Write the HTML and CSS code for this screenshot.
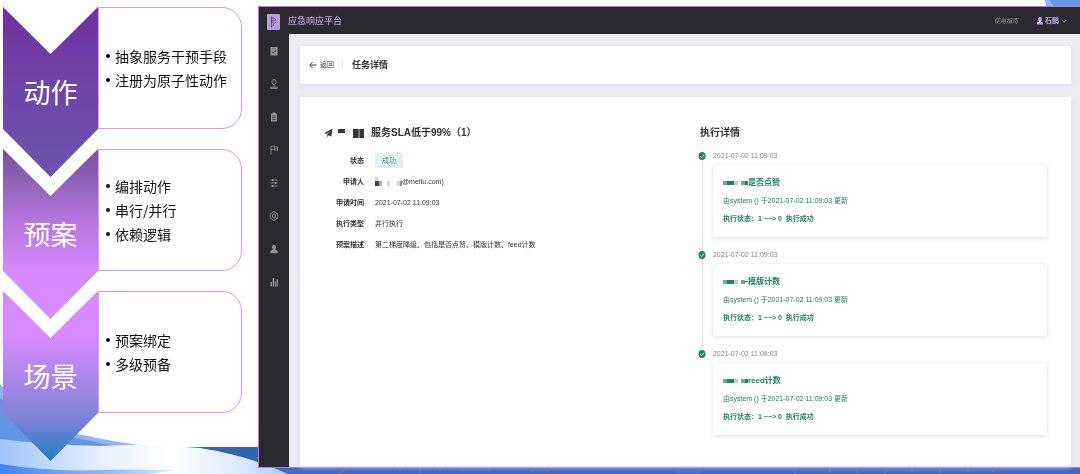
FILE: index.html
```
<!DOCTYPE html>
<html lang="zh-CN">
<head>
<meta charset="utf-8">
<title>应急响应平台</title>
<link rel="stylesheet" href="styles.css">
</head>
<body>
<svg class="backdrop" viewBox="0 0 1080 474" preserveAspectRatio="none" aria-hidden="true">
  <defs>
    <linearGradient id="wave" x1="0" x2="1"><stop offset="0" stop-color="#9fc4fb"/><stop offset=".35" stop-color="#e6f0ff"/><stop offset=".6" stop-color="#ffffff"/><stop offset=".85" stop-color="#d9e8ff"/><stop offset="1" stop-color="#a9cbff"/></linearGradient>
    <linearGradient id="low" x1="0" x2="1"><stop offset="0" stop-color="#3f83f2"/><stop offset=".6" stop-color="#8db8fa"/><stop offset="1" stop-color="#dfebff"/></linearGradient>
  </defs>
  <path fill="#8db5f6" d="M0 384Q30 420 78 434Q118 443 155 447H0Z"/>
  <path fill="#6494e4" d="M0 398Q30 424 66 436L120 447H0Z"/>
  <path fill="#3563b5" d="M150 447H258L258 466H1080V474H150Z"/>
  <path fill="#3b6dc4" d="M258 467H1080V474H258Z"/>
  <path fill="none" stroke="#4d82d6" d="M340 473l8-5M400 468v6M420 468v6M440 468v6M460 470h30M530 471h20M676 472h25M795 467v7M830 467v7M857 467v7M885 467v7M912 467v7M940 467v7M968 467v7M800 471h195"/>
  <path fill="url(#wave)" d="M0 439Q50 445 100 446Q150 443 200 448Q250 456 288 474H0Z"/>
  <path fill="url(#low)" d="M0 464Q50 472 100 470Q130 469 175 470L150 474H0Z"/>
  <path fill="#8db5f6" d="M1045 0h8l4 7h-11z"/>
  <path fill="#6494e4" d="M1050 0h30v7h-26z"/>
</svg>
<div class="slide">
  <section class="steps">
    <article class="step">
      <h2 class="arrow arrow-action">动作</h2>
      <ul class="points"><li>抽象服务干预手段</li><li>注册为原子性动作</li></ul>
    </article>
    <article class="step">
      <h2 class="arrow arrow-plan">预案</h2>
      <ul class="points"><li>编排动作</li><li>串行/并行</li><li>依赖逻辑</li></ul>
    </article>
    <article class="step">
      <h2 class="arrow arrow-scene">场景</h2>
      <ul class="points"><li>预案绑定</li><li>多级预备</li></ul>
    </article>
  </section>

  <div class="app">
    <header class="topbar">
      <svg class="logo" viewBox="0 0 13 16" aria-hidden="true"><rect width="13" height="16" rx="1" fill="#b99be0"/><g fill="none" stroke="#413650" stroke-width=".8"><path d="M4.500 13.500V3"/><path stroke-dasharray="1.200 .6" d="M4.500 2.500L9 5.500L5.500 8M6 4v6.500L9 8M4.500 13L7 11"/></g></svg>
      <h1 class="brand">应急响应平台</h1>
      <a class="guide" href="#">使用指南</a>
      <button class="user" type="button">
        <svg viewBox="0 0 8 8" class="user-icon" aria-hidden="true"><path fill="currentColor" d="M4 0a1.800 2.100 0 0 1 1 3.900V5h1.500Q7 5 7 7.500H1Q1 5 1.500 5H3V3.900A1.800 2.100 0 0 1 4 0z"/></svg>
        石鹏
        <svg viewBox="0 0 6 6" class="caret" aria-hidden="true"><path fill="none" stroke="currentColor" stroke-width=".7" d="M.8 2L3 4.300L5.200 2"/></svg>
      </button>
    </header>

    <nav class="sidebar" aria-label="主导航">
      <a href="#" aria-label="任务"><svg viewBox="0 0 10 10"><path fill="currentColor" d="M1.500 1h7v8.500h-7z"/><path fill="none" stroke="#2a292e" stroke-width=".8" d="M3 6l1.500.8L7 4.300"/><path stroke="#2a292e" stroke-width=".4" d="M3 2.800h4"/></svg></a>
      <a href="#" aria-label="位置"><svg viewBox="0 0 10 10"><g fill="none" stroke="currentColor" stroke-width=".9"><ellipse cx="5" cy="3" rx="2.100" ry="2.400"/><path d="M5 5.400v3M1.800 9.400V8.200h6.400v1.200z"/></g></svg></a>
      <a href="#" aria-label="清单"><svg viewBox="0 0 10 10"><path fill="currentColor" d="M2 1.500h1.800V.500h2.400v1H8v8H2z"/><path stroke="#2a292e" stroke-width=".7" d="M3.200 4h3.600M3.200 5.700h3.600M3.200 7.400h3.600"/></svg></a>
      <a href="#" aria-label="旗标"><svg viewBox="0 0 10 10"><path fill="none" stroke="currentColor" stroke-width=".8" d="M2 9.700V1.200h3.500v.7h3v3.400H5.500v-.8H2M5.500 1.900v2.600L8.500 2.500"/></svg></a>
      <a href="#" aria-label="配置"><svg viewBox="0 0 10 10"><g stroke="currentColor" stroke-width=".8"><path d="M1.500 2h7M1.500 5h7M1.500 8h7"/><path stroke-width="1.800" d="M3 2h1.500M5.800 5h1.500M3 8h1.500"/></g></svg></a>
      <a href="#" aria-label="设置"><svg viewBox="0 0 10 10"><g fill="none" stroke="currentColor" stroke-width=".8"><path d="M3.600.8h2.800l.5 1.300 1.500.4.600 2.500-.6 2.500-1.500.4-.5 1.300H3.600l-.5-1.300-1.500-.4L1 5l.6-2.500 1.500-.4z"/><ellipse cx="5" cy="5" rx="1.700" ry="2"/></g></svg></a>
      <a href="#" aria-label="用户"><svg viewBox="0 0 10 10"><path fill="currentColor" d="M5 .8a2 2.300 0 0 1 1.200 4.100v.7L8.600 7v2.200H1.400V7l2.400-1.400v-.7A2 2.300 0 0 1 5 .8z"/></svg></a>
      <a href="#" aria-label="统计"><svg viewBox="0 0 10 10"><path fill="currentColor" d="M1.500 5H3v4.500H1.500zM3.700 1h1.500v8.500H3.700zM5.900 4.200h1.200v5.300H5.900zM7.700 2.500H9v7H7.700z"/></svg></a>
    </nav>

    <main class="content">
      <div class="card titlebar">
        <a class="back" href="#"><svg viewBox="0 0 8 8" aria-hidden="true"><path fill="none" stroke="currentColor" stroke-width=".9" d="M7.500 4H1M3.500 1L.8 4l2.700 3"/></svg>返回</a>
        <h2>任务详情</h2>
      </div>

      <div class="card detail">
        <section class="summary">
          <h3 class="task-name">
            <svg class="plane" viewBox="0 0 9 10" aria-hidden="true"><path fill="currentColor" d="M8.500.5L7.300 8.500 4.700 7.300 3.600 9.500 3.200 6.500 7 2.500 2.500 6 .5 5z"/></svg>
            <svg class="mask-name" viewBox="0 0 34 12" aria-hidden="true"><path fill="#35363c" d="M1 2h7v4H1zM16 2h5v9h-5zM23 2h4v9h-4z"/><path fill="#777a80" d="M21 2h2v9h-2z"/><path fill="#e8e9ec" d="M8 2h6v5H8zM31 6h3v5h-3z"/></svg>
            <span>服务SLA低于99%（1）</span>
          </h3>
          <dl class="fields">
            <dt>状态</dt><dd><span class="tag">成功</span></dd>
            <dt>申请人</dt><dd class="applicant"><svg class="mask-mail" viewBox="0 0 27 10" aria-hidden="true"><path fill="#d6d7da" d="M0 0h3v4H0zM12 4h3v5h-3zM22 4h4v5h-4z"/><path fill="#3f4147" d="M0 4h4v5H0z"/><path fill="#aaa" d="M4 4h3v5H4z"/><path fill="#8d8f94" d="M25 4h2v5h-2z"/></svg>@meitu.com)</dd>
            <dt>申请时间</dt><dd>2021-07-02 11:09:03</dd>
            <dt>执行类型</dt><dd>并行执行</dd>
            <dt>预案描述</dt><dd>第二梯度降级、包括是否点赞、模版计数、feed计数</dd>
          </dl>
        </section>

        <section class="execution">
          <h3>执行详情</h3>
          <ol class="timeline">
            <li>
              <svg class="dot" viewBox="0 0 8 8" aria-hidden="true"><ellipse cx="4" cy="4" rx="3.500" ry="4" fill="#22835f"/><path fill="none" stroke="#fff" stroke-width=".9" d="M2.300 4.200l1.300 1.300L5.900 2.800"/></svg>
              <time>2021-07-02 11:09:03</time>
              <div class="event">
                <h4><svg class="mask-event" viewBox="0 0 25 8" aria-hidden="true"><path fill="#6fac96" d="M0 2h4v4H0zM18 2h4v4h-4z"/><path fill="#22835f" d="M4 2h7v4H4zM22 2h3v4h-3z"/><path fill="#b5d5ca" d="M11 2h4v4h-4z"/></svg>是否点赞</h4>
                <p>由system () 于2021-07-02 11:09:03 更新</p>
                <p class="result">执行状态：1 −−&gt; 0&nbsp; 执行成功</p>
              </div>
            </li>
            <li>
              <svg class="dot" viewBox="0 0 8 8" aria-hidden="true"><ellipse cx="4" cy="4" rx="3.500" ry="4" fill="#22835f"/><path fill="none" stroke="#fff" stroke-width=".9" d="M2.300 4.200l1.300 1.300L5.900 2.800"/></svg>
              <time>2021-07-02 11:09:03</time>
              <div class="event">
                <h4><svg class="mask-event" viewBox="0 0 25 8" aria-hidden="true"><path fill="#6fac96" d="M0 2h4v4H0zM18 2h4v4h-4z"/><path fill="#22835f" d="M4 2h7v4H4zM22 3h3v1h-3z"/><path fill="#b5d5ca" d="M11 2h4v4h-4z"/></svg>模版计数</h4>
                <p>由system () 于2021-07-02 11:09:03 更新</p>
                <p class="result">执行状态：1 −−&gt; 0&nbsp; 执行成功</p>
              </div>
            </li>
            <li>
              <svg class="dot" viewBox="0 0 8 8" aria-hidden="true"><ellipse cx="4" cy="4" rx="3.500" ry="4" fill="#22835f"/><path fill="none" stroke="#fff" stroke-width=".9" d="M2.300 4.200l1.300 1.300L5.900 2.800"/></svg>
              <time>2021-07-02 11:09:03</time>
              <div class="event">
                <h4><svg class="mask-event" viewBox="0 0 25 8" aria-hidden="true"><path fill="#6fac96" d="M0 2h4v4H0zM18 2h4v4h-4z"/><path fill="#22835f" d="M4 2h7v4H4zM22 2h3v4h-3z"/><path fill="#b5d5ca" d="M11 2h4v4h-4z"/></svg>reed计数</h4>
                <p>由system () 于2021-07-02 11:09:03 更新</p>
                <p class="result">执行状态：1 −−&gt; 0&nbsp; 执行成功</p>
              </div>
            </li>
          </ol>
        </section>
      </div>
    </main>
  </div>
</div>
</body>
</html>
```
FILE: styles.css
```
* { box-sizing: border-box; margin: 0; padding: 0; }
body {
  background: #fff;
  color: #303238;
  font-family: "Liberation Sans", "Noto Sans CJK SC", sans-serif;
  font-size: 7px;
  line-height: 10px;
}
a { color: inherit; text-decoration: none; }
ul, ol { list-style: none; }
svg { display: block; }

.backdrop { position: fixed; inset: 0; width: 100%; height: 100%; z-index: -1; }
.slide {
  display: grid;
  grid-template-columns: 258px 1fr;
  min-height: 100vh;
  padding: 6px 0;
}

/* process steps */
.steps { display: flex; flex-direction: column; gap: 20px; padding: 1px 16px 0 3px; }
.step { display: grid; grid-template: 122px / 95px 1fr; }
.arrow {
  display: flex;
  align-items: center;
  justify-content: center;
  height: 170px;
  clip-path: polygon(0 0, 50% 47px, 100% 0, 100% 122px, 50% 100%, 0 122px);
  color: #fff;
  font-family: "Noto Sans CJK SC", sans-serif;
  font-size: 27px;
  font-weight: 400;
  line-height: 36px;
}
.arrow-action { background: linear-gradient(#7030a0, #6f46a8 50%, #6a54ae); }
.arrow-plan { background: linear-gradient(#75509b, #b878e0 45%, #d78aff 75%, #d98cff); }
.arrow-scene { background: linear-gradient(#d88bff, #d88bff 25%, #a986e8 53%, #7f82d8 75%, #1c80be); }
.points {
  display: flex;
  flex-direction: column;
  justify-content: center;
  border: 1px solid #dc96ff;
  border-radius: 0 20px 20px 0;
  background: #fff;
  padding-left: 7px;
  color: #111;
  font-family: "Noto Sans CJK SC", sans-serif;
  font-size: 14px;
  line-height: 24px;
}
.points li { display: flex; align-items: center; gap: 5px; white-space: nowrap; }
.points li::before { content: ""; width: 4px; height: 4px; border-radius: 50%; background: #111; }

/* application frame */
.app {
  display: grid;
  grid-template: 27px 1fr / 30px 1fr;
  border: 1px solid #c46fe8;
  border-right: 0;
  background: #ecedf3;
}
.topbar {
  grid-column: 1 / -1;
  display: flex;
  align-items: center;
  padding: 0 13px 0 8px;
  background: #2a292e;
  color: #b99be0;
}
.logo { width: 13px; height: 16px; margin-top: 2px; }
.brand { margin-left: 8px; font-size: 9px; font-weight: 500; line-height: 14px; }
.guide { margin-left: auto; color: #98989d; font-size: 6px; font-style: italic; }
.user {
  display: flex;
  align-items: center;
  gap: 1px;
  margin-left: 18px;
  border: 0;
  background: none;
  color: #c3a6e8;
  font: inherit;
  font-weight: 700;
}
.user-icon { width: 8px; height: 8px; }
.caret { width: 6px; height: 6px; margin-left: 1px; }
.sidebar {
  display: flex;
  flex-direction: column;
  gap: 23px;
  padding-top: 12px;
  background: #2a292e;
  color: #929297;
}
.sidebar a { align-self: center; }
.sidebar svg { width: 10px; height: 10px; }

/* page content */
.content { display: flex; flex-direction: column; gap: 13px; padding: 12px 9px 1px 11px; }
.card { border-radius: 2px; background: #fff; box-shadow: 0 1px 4px #d8dae2; }
.titlebar { display: flex; align-items: center; height: 38px; padding: 0 9px; }
.back { display: flex; align-items: center; gap: 3px; }
.back svg { width: 8px; height: 8px; }
.titlebar h2 {
  margin-left: 8px;
  border-left: 1px solid #e6e7ea;
  padding-left: 9px;
  font-size: 9px;
  line-height: 10px;
}
.detail {
  flex: 1;
  display: grid;
  grid-template-columns: 52fr 48fr;
  align-items: start;
  padding: 28px 24px 30px;
}
.task-name { display: flex; align-items: center; font-size: 10px; line-height: 16px; }
.plane { width: 9px; height: 10px; }
.mask-name { width: 34px; height: 12px; margin-left: 4px; }
.fields {
  display: grid;
  grid-template-columns: 40px 1fr;
  grid-auto-rows: 15px;
  gap: 6px 11px;
  align-items: center;
  margin-top: 12px;
}
.fields dt { text-align: right; font-weight: 700; }
.tag {
  display: inline-block;
  padding: 0 7px;
  background: #e3f0f1;
  color: #4b9a82;
  line-height: 15px;
}
.applicant { display: flex; align-items: center; }
.mask-mail { width: 27px; height: 10px; }

/* execution timeline */
.execution h3 { font-size: 10px; line-height: 16px; }
.timeline { margin-top: 10px; }
.timeline li {
  display: grid;
  grid-template-columns: 5px 1fr;
  gap: 4px 8px;
  padding-bottom: 13px;
  background: linear-gradient(#dfe1e8, #dfe1e8) 2px 0 / 1px 100% no-repeat;
}
.timeline li:last-child { padding-bottom: 0; background: none; }
.dot { width: 8px; height: 8px; margin: 1px 0 0 -2px; }
.timeline time { color: #85878d; }
.event {
  grid-column: 2;
  border-radius: 2px;
  background: #fff;
  padding: 9px 10px;
  box-shadow: 0 1px 5px #dfdfe3;
  color: #22835f;
  line-height: 18px;
}
.event h4 { display: flex; align-items: center; font-size: 8px; }
.mask-event { width: 25px; height: 8px; }
.result { font-weight: 700; }
```
